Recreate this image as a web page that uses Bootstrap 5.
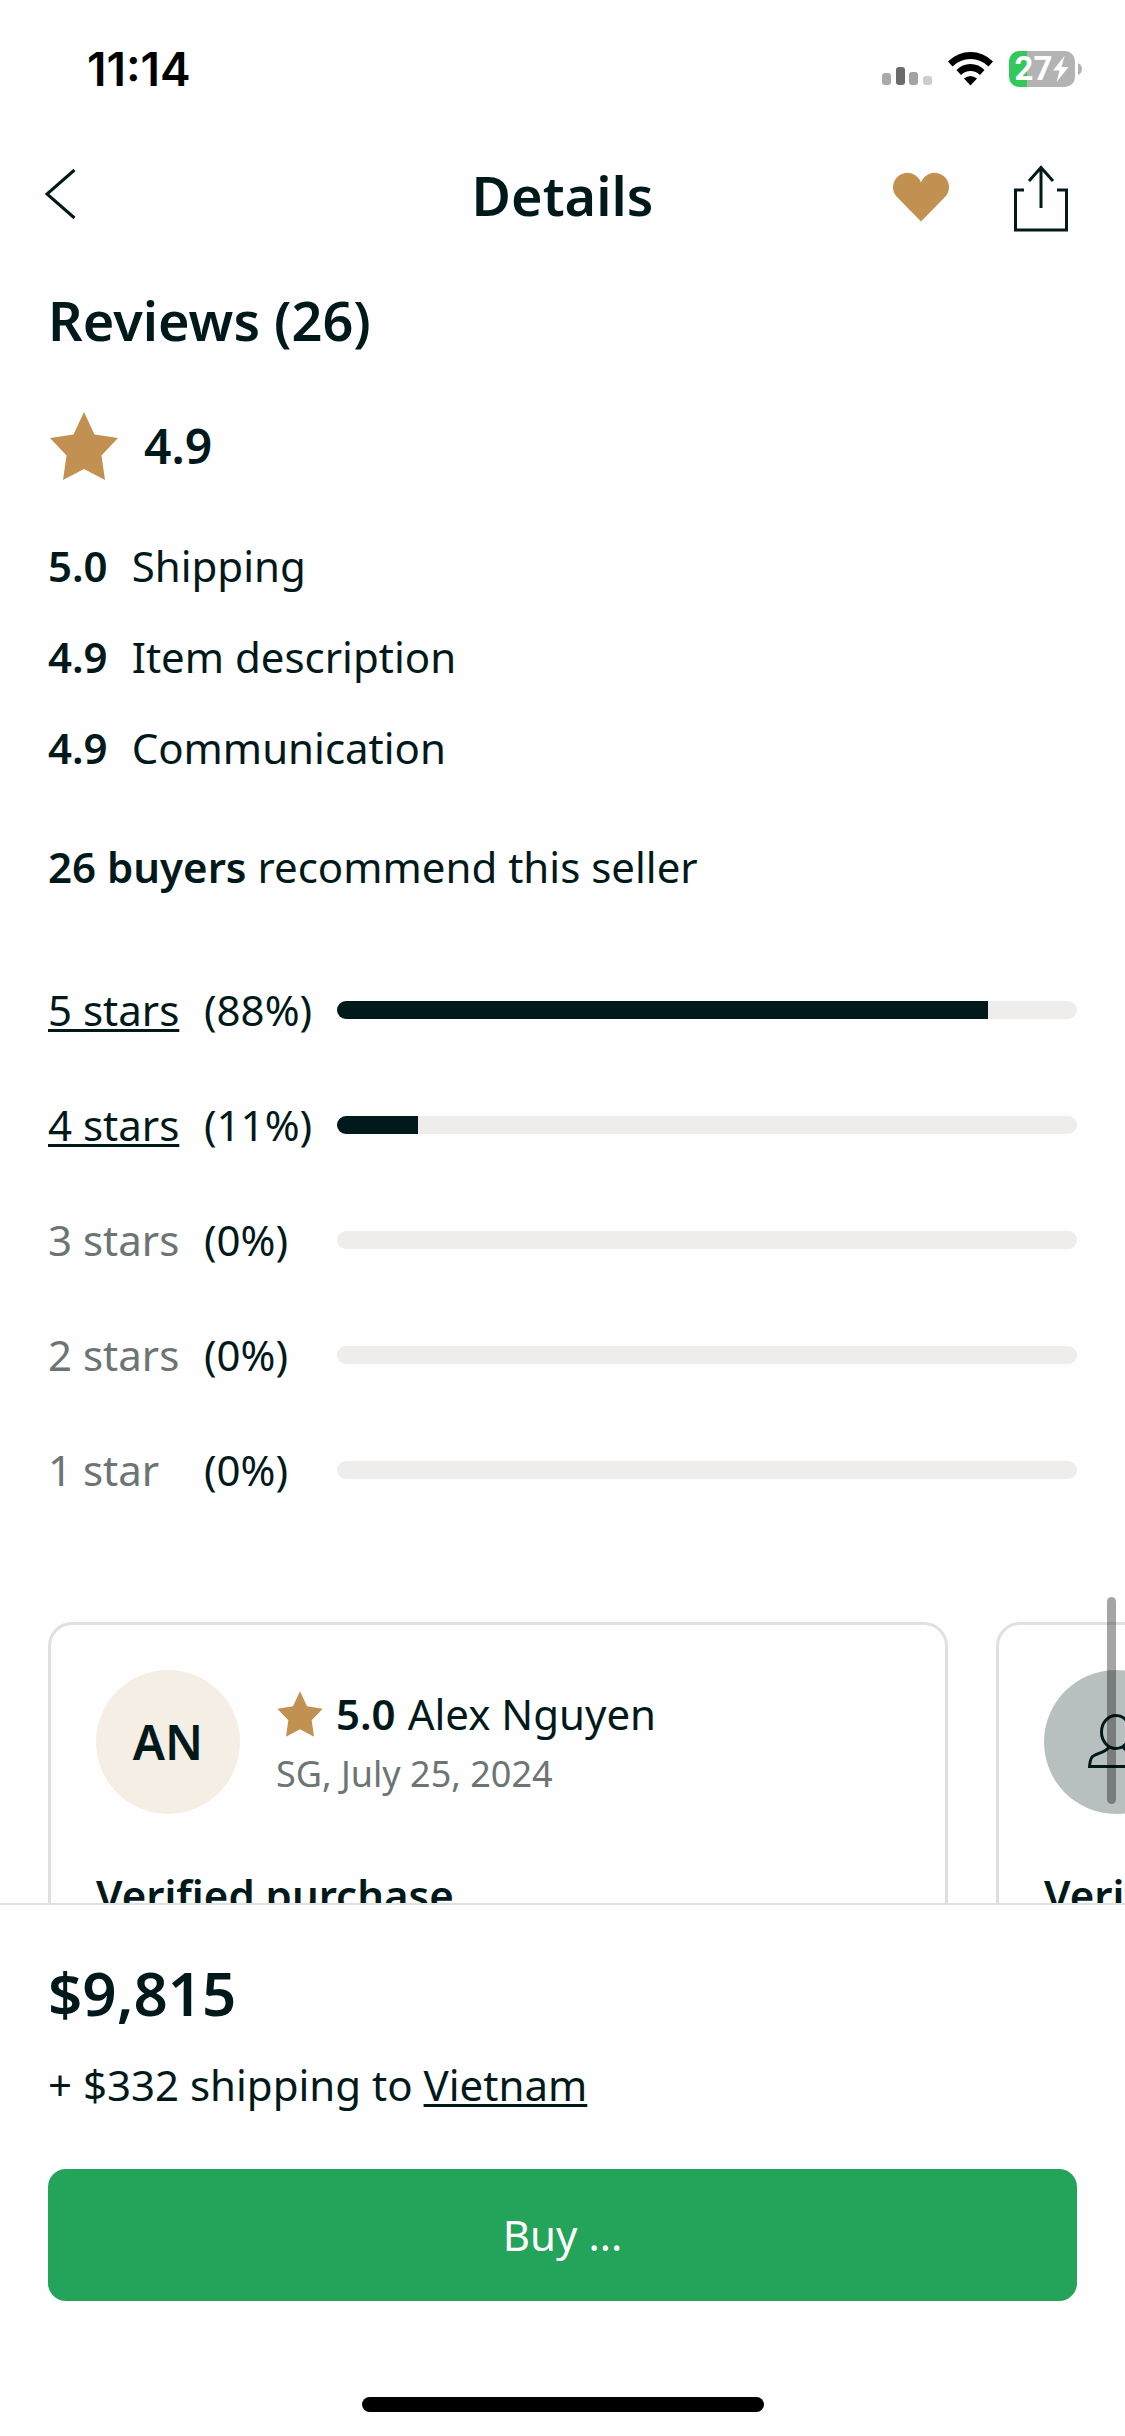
<!DOCTYPE html>
<html lang="en">
<head>
<meta charset="utf-8">
<meta name="viewport" content="width=device-width, initial-scale=1">
<title>Details</title>
<link href="https://cdn.jsdelivr.net/npm/bootstrap@5.3.0/dist/css/bootstrap.min.css" rel="stylesheet">
<style>
:root { --ink: #02191b; --muted: #6c7474; --gold: #c29151; --line: #dfe0e0; --green: #24a35a; --gutter: 48px; }
body { background: #fefefe; color: var(--ink); font-family: "Noto Sans", "Open Sans", sans-serif; font-size: 42px; line-height: 56px; }
.screen { height: 100vh; }
.gutter { padding-left: var(--gutter); padding-right: var(--gutter); }
.statusbar { height: 132px; padding: 43px 43px 0 87px; color: #000; }
.clock { font: 600 46px/52px Inter, sans-serif; }
.status-icons { height: 52px; }
.battery { width: 66px; height: 36px; border-radius: 10px; background: linear-gradient(to right, #34c759 27%, #b3b3b3 27%); font: 700 33px/36px Roboto, sans-serif; color: #fff; }
.navrow { display: grid; grid-template-columns: 1fr auto 1fr; height: 126px; padding-left: 44px; padding-right: 44px; }
.heading { font-size: 54px; line-height: 72px; font-weight: 600; margin: 0; }
.icon-btn { background: none; border: 0; padding: 0; color: var(--ink); display: block; }
.nav-tools { gap: 64px; padding-right: 13px; }
svg { display: block; flex: none; }
.reviews { padding-top: 26px; min-height: 0; }
.score { font-size: 48px; line-height: 64px; }
.score-row { margin-top: 56px; gap: 24px; }
.aspects { margin-top: 58px; gap: 35px; }
.aspect { gap: 24px; }
.recommend { margin: 63px 0 0; }
.breakdown { margin-top: 87px; gap: 59px; }
.stars-row { display: grid; grid-template-columns: 132px 109px 1fr; column-gap: 24px; align-items: center; }
.txt-link { color: inherit; text-decoration: underline; text-decoration-thickness: 3px; text-underline-offset: 3px; text-decoration-skip-ink: none; }
.muted { color: var(--muted); }
.progress { --bs-progress-height: 18px; --bs-progress-bg: #eeedec; --bs-progress-bar-bg: var(--ink); --bs-progress-border-radius: 9px; }
.review-strip { margin-top: 124px; gap: 48px; }
.review-card { flex: 0 0 80vw; border: 3px solid var(--line); border-radius: 24px; padding: 45px; }
.avatar { width: 144px; height: 144px; background: #f5eee5; font-size: 48px; line-height: 64px; }
.avatar-anon { background: #b8c0bf; }
.byline { gap: 8px; }
.rating-line { gap: 12px; }
.review-head { gap: 36px; }
.review-date { font-size: 36px; line-height: 48px; }
.verified { margin: 53px 0 0; }
.scroll-thumb { position: absolute; right: 9px; top: 1339px; width: 9px; height: 207px; border-radius: 5px; background: rgba(0,0,0,.35); }
.buybar { border-top: 2px solid var(--line); padding-top: 48px; padding-bottom: 24px; }
.price { font-size: 60px; line-height: 80px; margin: 0; }
.ship { margin: 24px 0 56px; }
.btn-buy { --bs-btn-font-size: 42px; --bs-btn-line-height: 56px; --bs-btn-padding-y: 38px; --bs-btn-border-width: 0; --bs-btn-border-radius: 18px; --bs-btn-color: #fff; --bs-btn-bg: var(--green); --bs-btn-hover-color: #fff; --bs-btn-hover-bg: #1f8f4e; }
.home-bar { width: 402px; height: 15px; margin-top: 96px; background: #000; }
.semi { font-weight: 600; }
</style>
<script src="https://cdn.jsdelivr.net/npm/bootstrap@5.3.0/dist/js/bootstrap.bundle.min.js"></script>
</head>
<body>
<div class="screen d-flex flex-column overflow-hidden">
  <div class="statusbar d-flex justify-content-between align-items-start flex-shrink-0">
    <span class="clock">11:14</span>
    <div class="status-icons d-flex align-items-center">
      <svg class="me-3" width="51" height="36" viewBox="0 0 51 36" aria-hidden="true">
        <rect x="1" y="22" width="9" height="12" rx="3" fill="#a9a9a9"/><rect x="15" y="16" width="9" height="18" rx="3" fill="#6b6b6b"/><rect x="28" y="21" width="9" height="13" rx="3" fill="#a3a3a3"/><rect x="42" y="25" width="9" height="9" rx="3" fill="#cdcdcd"/>
      </svg>
      <svg class="me-3" width="45" height="36" viewBox="0 0 45 36" aria-hidden="true">
        <path d="M0 10.500Q9.500 1 22.500 1T45 10.500L40.500 15.500Q33 8 22.500 8T4.500 15.500ZM8.500 19Q14 13 22.500 13T36.500 19L32 24Q28 20 22.500 20T13 24ZM16 27.500Q22.500 22.500 29 27.500L22.500 34.500Z" fill="#000"/>
      </svg>
      <div class="battery d-flex align-items-center justify-content-center">
        <span>27</span>
        <svg width="17" height="26" viewBox="0 0 17 26" aria-hidden="true"><path d="M12.500 0L1 14.500H7.500L4.500 26L16.500 11H9.500Z" fill="#fff"/></svg>
      </div>
      <svg width="7" height="12" viewBox="0 0 7 12" aria-hidden="true"><path d="M3 0Q7 2 7 6T3 12Z" fill="#b3b3b3"/></svg>
    </div>
  </div>

  <header class="navrow align-items-center flex-shrink-0">
    <button class="icon-btn" type="button" aria-label="Back">
      <svg width="34" height="54" viewBox="0 0 34 54" fill="none" stroke="currentColor" stroke-width="3"><path d="M30.500 2L3 26L30.500 50"/></svg>
    </button>
    <h1 class="heading">Details</h1>
    <div class="nav-tools d-flex align-items-center justify-content-end">
      <button class="icon-btn" type="button" aria-label="Favourite">
        <svg width="56" height="54" viewBox="0 0 56 54"><path d="M28 53.500L5.500 30.500A14.400 14.400 0 1 1 28 14.500A14.400 14.400 0 1 1 50.500 30.500Z" fill="#c29151"/></svg>
      </button>
      <button class="icon-btn" type="button" aria-label="Share">
        <svg width="55" height="74" viewBox="0 0 55 74" fill="none" stroke="currentColor" stroke-width="3"><path d="M11 32H2.500V72H53.500V32H44M28 50V9M16 23L28 9.500L40 23"/></svg>
      </button>
    </div>
  </header>

  <main class="reviews gutter flex-grow-1 overflow-hidden position-relative">
    <h2 class="heading">Reviews (26)</h2>
    <div class="score-row d-flex align-items-center">
      <svg width="72" height="68" viewBox="0 0 72 68"><path d="M36 0L46.500 22.500L70 26L53.500 43.500L57 68L36 57L15 68L18.500 43.500L2 26L25.500 22.500Z" fill="#c29151"/></svg>
      <span class="score semi">4.9</span>
    </div>
    <div class="aspects d-flex flex-column">
      <div class="aspect d-flex"><span class="semi">5.0</span><span>Shipping</span></div>
      <div class="aspect d-flex"><span class="semi">4.9</span><span>Item description</span></div>
      <div class="aspect d-flex"><span class="semi">4.9</span><span>Communication</span></div>
    </div>
    <p class="recommend"><span class="semi">26 buyers</span> recommend this seller</p>

    <div class="breakdown d-flex flex-column">
      <div class="stars-row"><a class="txt-link" href="#">5 stars</a><span>(88%)</span><div class="progress" role="progressbar" aria-label="5 stars" aria-valuenow="88" aria-valuemin="0" aria-valuemax="100"><div class="progress-bar" style="width:88%"></div></div></div>
      <div class="stars-row"><a class="txt-link" href="#">4 stars</a><span>(11%)</span><div class="progress" role="progressbar" aria-label="4 stars" aria-valuenow="11" aria-valuemin="0" aria-valuemax="100"><div class="progress-bar" style="width:11%"></div></div></div>
      <div class="stars-row"><span class="muted">3 stars</span><span>(0%)</span><div class="progress" role="progressbar" aria-label="3 stars" aria-valuenow="0" aria-valuemin="0" aria-valuemax="100"></div></div>
      <div class="stars-row"><span class="muted">2 stars</span><span>(0%)</span><div class="progress" role="progressbar" aria-label="2 stars" aria-valuenow="0" aria-valuemin="0" aria-valuemax="100"></div></div>
      <div class="stars-row"><span class="muted">1 star</span><span>(0%)</span><div class="progress" role="progressbar" aria-label="1 star" aria-valuenow="0" aria-valuemin="0" aria-valuemax="100"></div></div>
    </div>

    <div class="review-strip d-flex">
      <article class="review-card">
        <div class="review-head d-flex align-items-center">
          <div class="avatar rounded-circle d-flex align-items-center justify-content-center semi">AN</div>
          <div class="byline d-flex flex-column">
            <div class="rating-line d-flex align-items-center">
              <svg width="48" height="46" viewBox="0 0 72 68"><path d="M36 0L46.500 22.500L70 26L53.500 43.500L57 68L36 57L15 68L18.500 43.500L2 26L25.500 22.500Z" fill="#c29151"/></svg>
              <span class="semi">5.0</span>
              <span>Alex Nguyen</span>
            </div>
            <div class="review-date muted">SG, July 25, 2024</div>
          </div>
        </div>
        <p class="verified semi">Verified purchase</p>
      </article>
      <article class="review-card">
        <div class="avatar avatar-anon rounded-circle d-flex align-items-center justify-content-center">
          <svg width="56" height="56" viewBox="0 0 56 56" fill="none" stroke="#02191b" stroke-width="3"><ellipse cx="28" cy="18" rx="14.500" ry="16.500"/><path d="M21 32.500C19 39 7 39 4 43Q2 46 1.500 52.500H54.500Q54 46 52 43C49 39 37 39 35 32.500"/></svg>
        </div>
        <p class="verified semi">Verified purchase</p>
      </article>
    </div>
    <div class="scroll-thumb"></div>
  </main>

  <footer class="buybar gutter flex-shrink-0">
    <p class="price semi">$9,815</p>
    <p class="ship">+ $332 shipping to <a class="txt-link" href="#">Vietnam</a></p>
    <button class="btn btn-buy w-100" type="button">Buy ...</button>
    <div class="home-bar rounded-pill mx-auto"></div>
  </footer>
</div>
</body>
</html>
